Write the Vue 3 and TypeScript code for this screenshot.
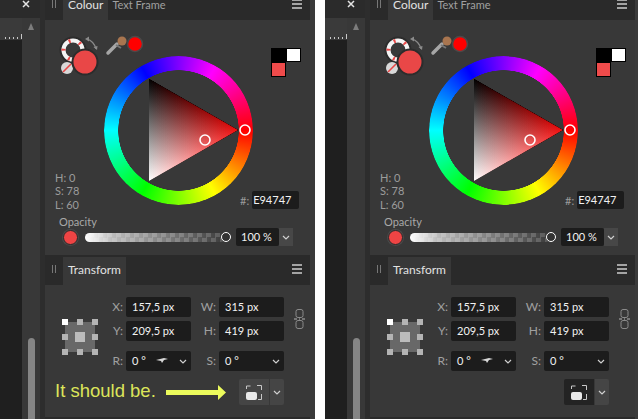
<script setup lang="ts">
const screens = [{ id: 'a', note: true }, { id: 'b', note: false }]

const fields = [
  { label: 'X:', value: '157,5 px' },
  { label: 'W:', value: '315 px' },
  { label: 'Y:', value: '209,5 px' },
  { label: 'H:', value: '419 px' }
]

const handles = [0, 1, 2, 3, 4, 5, 6, 7, 8]
</script>

<template>
  <div class="screens">
    <div v-for="screen in screens" :key="screen.id" class="screen">
      <div class="rail">
        <div class="rail-top">
          <svg width="8" height="8" viewBox="0 0 8 8" class="close">
            <path d="M1 1l6 6M7 1L1 7" stroke="#e4e4e4" stroke-width="1.5" />
          </svg>
        </div>
        <div class="rail-main">
          <div class="canvas">
            <div class="ruler"><i></i><i></i><i></i><i></i><i class="tall"></i></div>
            <div class="canvas-fill"></div>
          </div>
          <div class="track">
            <div class="track-up"></div>
            <div class="thumb"></div>
          </div>
        </div>
      </div>

      <div class="dock">
        <div class="panel-head cropped">
          <div class="grip"><i></i><i></i></div>
          <div class="tab active">Colour</div>
          <div class="tab">Text Frame</div>
          <div class="burger"><i></i><i></i><i></i></div>
        </div>

        <div class="colour-body">
          <div class="colour-main">
            <div class="col-left">
              <div class="tools">
                <svg width="84" height="42" viewBox="0 0 84 42" class="tools-svg">
                  <circle cx="13" cy="14" r="12.500" fill="none" stroke="#2c2c2c" stroke-width="2" />
                  <circle cx="13" cy="14" r="9.500" fill="none" stroke="#f4f4f4" stroke-width="4" />
                  <circle cx="13" cy="14" r="9.500" fill="none" stroke="#e94747" stroke-width="4" stroke-dasharray="2 9" stroke-dashoffset="4" />
                  <path d="M27 3c4 1 8 5 9 10" fill="none" stroke="#8b8b8b" stroke-width="1.200" />
                  <path d="M25 3l4-2.500v5zM37 14l-3.500-3 4-1z" fill="#8b8b8b" />
                  <circle cx="7" cy="32" r="6" fill="#d9d9d9" />
                  <path d="M3 36l8-8" stroke="#e94747" stroke-width="1.600" />
                  <circle cx="25" cy="26" r="12.500" fill="#e94747" stroke="#2c2c2c" stroke-width="2" />
                  <path d="M48 17l9-9" stroke="#a6a6a6" stroke-width="3.500" stroke-linecap="round" />
                  <circle cx="62" cy="5" r="4.500" fill="#a8754f" />
                  <path d="M56 9l5 3" stroke="#777" stroke-width="2" />
                  <circle cx="75" cy="8" r="7.500" fill="#ff0000" stroke="#4a4a4a" stroke-width="1.500" />
                </svg>
              </div>
              <div class="hsl">
                <div>H: 0</div>
                <div>S: 78</div>
                <div>L: 60</div>
              </div>
            </div>

            <div class="wheel">
              <div class="ring"></div>
              <svg class="wheel-svg" width="149" height="149" viewBox="0 0 149 149">
                <defs>
                  <linearGradient :id="`red-${screen.id}`" gradientUnits="userSpaceOnUse" x1="45" y1="74" x2="134" y2="74">
                    <stop offset="0" stop-color="#000" />
                    <stop offset="1" stop-color="#f01010" />
                  </linearGradient>
                  <linearGradient :id="`white-${screen.id}`" gradientUnits="userSpaceOnUse" x1="45" y1="125" x2="89.500" y2="48.500">
                    <stop offset="0" stop-color="#fff" />
                    <stop offset="1" stop-color="#000" />
                  </linearGradient>
                </defs>
                <g class="tri">
                  <polygon points="45,23 45,125 134,74" fill="#000" />
                  <polygon class="add" points="45,23 45,125 134,74" :fill="`url(#red-${screen.id})`" />
                  <polygon class="add" points="45,23 45,125 134,74" :fill="`url(#white-${screen.id})`" />
                </g>
                <circle cx="141" cy="74" r="5" fill="none" stroke="#fff" stroke-width="1.600" />
                <circle cx="101" cy="84" r="5" fill="none" stroke="#fff" stroke-width="1.600" />
              </svg>
            </div>

            <div class="col-right">
              <div class="swatches">
                <span class="sw-black"></span>
                <span class="sw-white"></span>
                <span class="sw-red"></span>
              </div>
              <div class="hex">
                <span class="hex-label">#:</span>
                <span class="input hex-input">E94747</span>
              </div>
            </div>
          </div>

          <div class="opacity-label">Opacity</div>
          <div class="opacity-row">
            <span class="op-swatch"></span>
            <div class="slider">
              <span class="slider-handle"></span>
            </div>
            <span class="input op-input">100 %</span>
            <span class="chev-btn">
              <svg width="8" height="5" viewBox="0 0 8 5"><path d="M1 1l3 3 3-3" fill="none" stroke="#d0d0d0" stroke-width="1.200" /></svg>
            </span>
          </div>
        </div>

        <div class="panel-head">
          <div class="grip"><i></i><i></i></div>
          <div class="tab active">Transform</div>
          <div class="burger"><i></i><i></i><i></i></div>
        </div>

        <div class="transform-body">
          <div class="transform-top">
            <div class="anchor">
              <span class="anchor-body"></span>
              <span
                v-for="h in handles"
                :key="h"
                class="handle"
                :class="{ first: h === 0, centre: h === 4 }"
              ></span>
            </div>

            <div class="fields">
              <template v-for="f in fields" :key="f.label">
                <span class="f-label">{{ f.label }}</span>
                <span class="input">{{ f.value }}</span>
              </template>
              <span class="f-label spaced">R:</span>
              <span class="input spaced select">
                0 °
                <svg class="swoosh" width="12" height="6" viewBox="0 0 12 6"><path d="M0 2l8-2 4 1-4 1-2 3-1-2z" fill="#d8d8d8" /></svg>
                <svg class="select-chev" width="8" height="5" viewBox="0 0 8 5"><path d="M1 1l3 3 3-3" fill="none" stroke="#d0d0d0" stroke-width="1.200" /></svg>
              </span>
              <span class="f-label spaced">S:</span>
              <span class="input spaced select">
                0 °
                <svg class="select-chev" width="8" height="5" viewBox="0 0 8 5"><path d="M1 1l3 3 3-3" fill="none" stroke="#d0d0d0" stroke-width="1.200" /></svg>
              </span>
            </div>

            <svg class="link" width="11" height="20" viewBox="0 0 11 20">
              <rect x="2" y="0.500" width="7" height="8" rx="2" fill="none" stroke="#8a8a8a" />
              <rect x="2" y="11.500" width="7" height="8" rx="2" fill="none" stroke="#8a8a8a" />
              <path d="M0 10h3M8 10h3M5 10h1" stroke="#8a8a8a" stroke-width="1.500" />
            </svg>
          </div>

          <div class="note-row">
            <template v-if="screen.note">
              <span class="note">It should be.</span>
              <svg class="arrow" width="60" height="15" viewBox="0 0 60 15">
                <path d="M0 5h52V0l8 7.500-8 7.500v-5H0z" fill="#ecfb5c" />
              </svg>
            </template>
            <div class="origin" :class="{ dark: !screen.note }">
              <svg width="16" height="15" viewBox="0 0 16 15">
                <path d="M0.500 4V1h4M11 0.500h4.500V5M15.500 9v5.500H12" fill="none" stroke="#c8c8c8" />
                <rect x="0" y="7" width="11" height="8" rx="2" fill="#e8e8e8" />
              </svg>
            </div>
            <span class="origin-chev">
              <svg width="8" height="5" viewBox="0 0 8 5"><path d="M1 1l3 3 3-3" fill="none" stroke="#d0d0d0" stroke-width="1.200" /></svg>
            </span>
          </div>
        </div>
        <div class="dock-end"></div>
      </div>
    </div>
  </div>
</template>

<style>
html,
body {
  margin: 0;
  background: #fff;
}
</style>

<style scoped>
.screens {
  display: flex;
  gap: 10px;
  width: 638px;
  height: 419px;
  overflow: hidden;
  background: #fff;
  font-family: Lato, "Open Sans", "Liberation Sans", sans-serif;
  font-size: 11px;
  color: #a8a8a8;
}

.screen {
  flex: 0 0 315px;
  display: flex;
  height: 419px;
  overflow: hidden;
  background: #3a3a3a;
}

/* left strip: canvas edge and scrollbar */
.rail {
  flex: 0 0 45px;
  display: flex;
  flex-direction: column;
  background: #2d2d2d;
}

.rail-top {
  height: 18px;
  width: 40px;
  background: #2b2b2b;
  display: flex;
  justify-content: flex-end;
  padding-right: 10px;
  box-sizing: border-box;
}

.rail-main {
  flex: 1;
  display: flex;
  width: 40px;
}

.canvas {
  flex: 0 0 22px;
  display: flex;
  flex-direction: column;
}

.ruler {
  height: 22px;
  background: #3a3a3a;
  display: flex;
  align-items: flex-end;
  justify-content: flex-end;
  gap: 3px;
}

.ruler i {
  width: 1px;
  height: 2px;
  margin-bottom: 1px;
  background: #c8c8c8;
}

.ruler i.tall {
  height: 5px;
}

.canvas-fill {
  flex: 1;
  background: #1f1f1f;
}

.track {
  flex: 1;
  background: #383838;
  display: flex;
  flex-direction: column;
  align-items: center;
}

.track-up {
  margin-top: 5px;
  width: 0;
  height: 0;
  border-left: 3.500px solid transparent;
  border-right: 3.500px solid transparent;
  border-bottom: 7px solid #7c7c7c;
}

.thumb {
  margin-top: 308px;
  flex: 1;
  width: 7px;
  border-radius: 4px 4px 0 0;
  background: #858585;
}

.dock {
  flex: 0 0 265px;
  display: flex;
  flex-direction: column;
}

.panel-head {
  flex: 0 0 30px;
  display: flex;
  align-items: flex-end;
  background: #2a2a2a;
}

.panel-head.cropped {
  margin-top: -10px;
}

.grip {
  flex: 0 0 18px;
  height: 28px;
  padding-bottom: 4px;
  box-sizing: border-box;
  display: flex;
  justify-content: center;
  align-items: center;
  gap: 2px;
}

.grip i {
  width: 1px;
  height: 8px;
  background: #777;
}

.tab {
  height: 28px;
  padding: 0 5px 4px 4px;
  box-sizing: border-box;
  display: flex;
  align-items: center;
  font-size: 11px;
  color: #a0a0a0;
}

.tab.active {
  padding: 0 5px 4px;
  background: #383838;
  font-size: 12px;
  color: #e2e2e2;
}

.burger {
  margin-left: auto;
  margin-right: 8px;
  margin-bottom: 11px;
  display: flex;
  flex-direction: column;
  gap: 2px;
  width: 10px;
}

.burger i {
  height: 2px;
  background: #a4a4a4;
}

.colour-body {
  flex: 0 0 235px;
  background: #383838;
  box-sizing: border-box;
}

.colour-main {
  height: 190px;
  display: grid;
  grid-template-columns: 59px 149px 1fr;
}

.col-left {
  display: flex;
  flex-direction: column;
  justify-content: space-between;
}

.tools {
  padding: 16px 0 0 15px;
  width: 84px;
}

.tools-svg {
  display: block;
  overflow: visible;
}

.hsl {
  padding: 0 0 0 10px;
  margin-bottom: -1px;
  line-height: 13.500px;
  font-size: 11px;
  color: #9c9c9c;
}

.wheel {
  position: relative;
  width: 149px;
  height: 149px;
  margin-top: 35.500px;
}

.ring {
  width: 149px;
  height: 149px;
  border-radius: 50%;
  background: conic-gradient(from 90deg, #f00, #ff0, #0f0, #0ff, #00f, #f0f, #f00);
  -webkit-mask: radial-gradient(circle closest-side, transparent 60px, #000 60.500px);
  mask: radial-gradient(circle closest-side, transparent 60px, #000 60.500px);
}

.wheel-svg {
  position: absolute;
  left: 0;
  top: 0;
}

.tri {
  isolation: isolate;
}

.add {
  mix-blend-mode: plus-lighter;
}

.col-right {
  display: flex;
  flex-direction: column;
  justify-content: space-between;
  padding: 28px 0 1px 18px;
  min-width: 0;
}

.swatches {
  display: grid;
  grid-template-columns: 15px 15px;
  grid-template-rows: 14px 15px;
  width: 30px;
}

.sw-black {
  background: #000;
}

.sw-white {
  background: #fff;
  box-shadow: inset 0 0 0 1px #000;
}

.sw-red {
  background: #ef4b4b;
  box-shadow: inset 0 0 0 1px #000;
}

.hex {
  display: flex;
  align-items: center;
  gap: 3px;
  margin-left: -31px;
}

.hex-label {
  color: #9c9c9c;
}

.input {
  background: #1c1c1c;
  border-radius: 2px;
  color: #f2f2f2;
  height: 20px;
  line-height: 20px;
  padding-left: 6px;
  box-sizing: border-box;
  font-size: 11px;
  white-space: nowrap;
}

.hex-input {
  width: 47px;
  height: 18px;
  line-height: 18px;
  padding-left: 1px;
}

.opacity-label {
  margin: 6px 0 0 14px;
  line-height: 12px;
  font-size: 11px;
}

.opacity-row {
  display: flex;
  align-items: center;
  height: 18px;
  padding-left: 18px;
}

.op-swatch {
  flex: 0 0 13px;
  height: 13px;
  border-radius: 50%;
  background: #ee4444;
  border: 1.500px solid #2a2a2a;
  box-shadow: 0 0 0 1px #4a4a4a;
}

.slider {
  position: relative;
  margin-left: 7px;
  flex: 0 0 140px;
  height: 9px;
  border-radius: 5px;
  background:
    linear-gradient(90deg, #fff, rgba(255, 255, 255, 0.65) 20%, rgba(255, 255, 255, 0) 100%),
    repeating-conic-gradient(#5a5a5a 0 25%, #3b3b3b 0 50%) 0 0 / 9px 9px;
}

.slider-handle {
  position: absolute;
  right: -6px;
  top: -1px;
  width: 8px;
  height: 8px;
  border: 1.500px solid #fff;
  border-radius: 50%;
  background: #333;
}

.op-input {
  margin-left: 11px;
  flex: 0 0 43px;
  height: 18px;
  line-height: 18px;
  padding-left: 5px;
}

.chev-btn {
  flex: 0 0 14px;
  height: 18px;
  background: #474747;
  display: flex;
  align-items: center;
  justify-content: center;
}

.panel-head + .transform-body {
  flex: 1;
}

.transform-body {
  background: #383838;
  display: flex;
  flex-direction: column;
}

.transform-top {
  display: flex;
  padding-top: 12px;
}

.anchor {
  position: relative;
  margin: 22px 0 0 17px;
  width: 36px;
  height: 36px;
  display: grid;
  grid-template-columns: repeat(3, 6px);
  grid-template-rows: repeat(3, 6px);
  justify-content: space-between;
  align-content: space-between;
}

.anchor-body {
  position: absolute;
  inset: 3px;
  background: #686868;
}

.handle {
  position: relative;
  background: #b4b4b4;
}

.handle.first {
  background: #fff;
}

.handle.centre {
  margin: -2px;
  background: #bcbcbc;
}

.fields {
  margin-left: 10px;
  display: grid;
  grid-template-columns: 18px 65px 28px 65px;
  row-gap: 4px;
  align-items: start;
}

.f-label {
  height: 20px;
  line-height: 20px;
  text-align: right;
  padding-right: 3px;
  color: #a0a0a0;
  font-size: 12px;
}

.spaced {
  margin-top: 6px;
}

.select {
  position: relative;
  display: flex;
  align-items: center;
  gap: 0;
}

.swoosh {
  margin-left: 10px;
}

.select-chev {
  position: absolute;
  right: 4px;
  top: 8px;
}

.link {
  margin: 12px 0 0 10px;
}

.note-row {
  margin-top: 8px;
  display: flex;
  align-items: center;
  justify-content: flex-end;
  height: 26px;
  padding: 0 26px 0 10px;
}

.note {
  font-family: "Liberation Sans", Arial, sans-serif;
  font-size: 18.500px;
  color: #dde55a;
  margin-right: auto;
  margin-top: -2px;
  white-space: nowrap;
}

.arrow {
  margin-right: 13px;
}

.origin {
  flex: 0 0 30px;
  height: 26px;
  background: #454545;
  border-radius: 2px 0 0 2px;
  display: flex;
  align-items: center;
  justify-content: center;
}

.origin.dark {
  background: #232323;
}

.origin-chev {
  flex: 0 0 14px;
  margin-left: 1px;
  height: 26px;
  background: #454545;
  border-radius: 0 2px 2px 0;
  display: flex;
  align-items: center;
  justify-content: center;
}

.dock-end {
  flex: 0 0 2px;
  background: #2a2a2a;
}
</style>
